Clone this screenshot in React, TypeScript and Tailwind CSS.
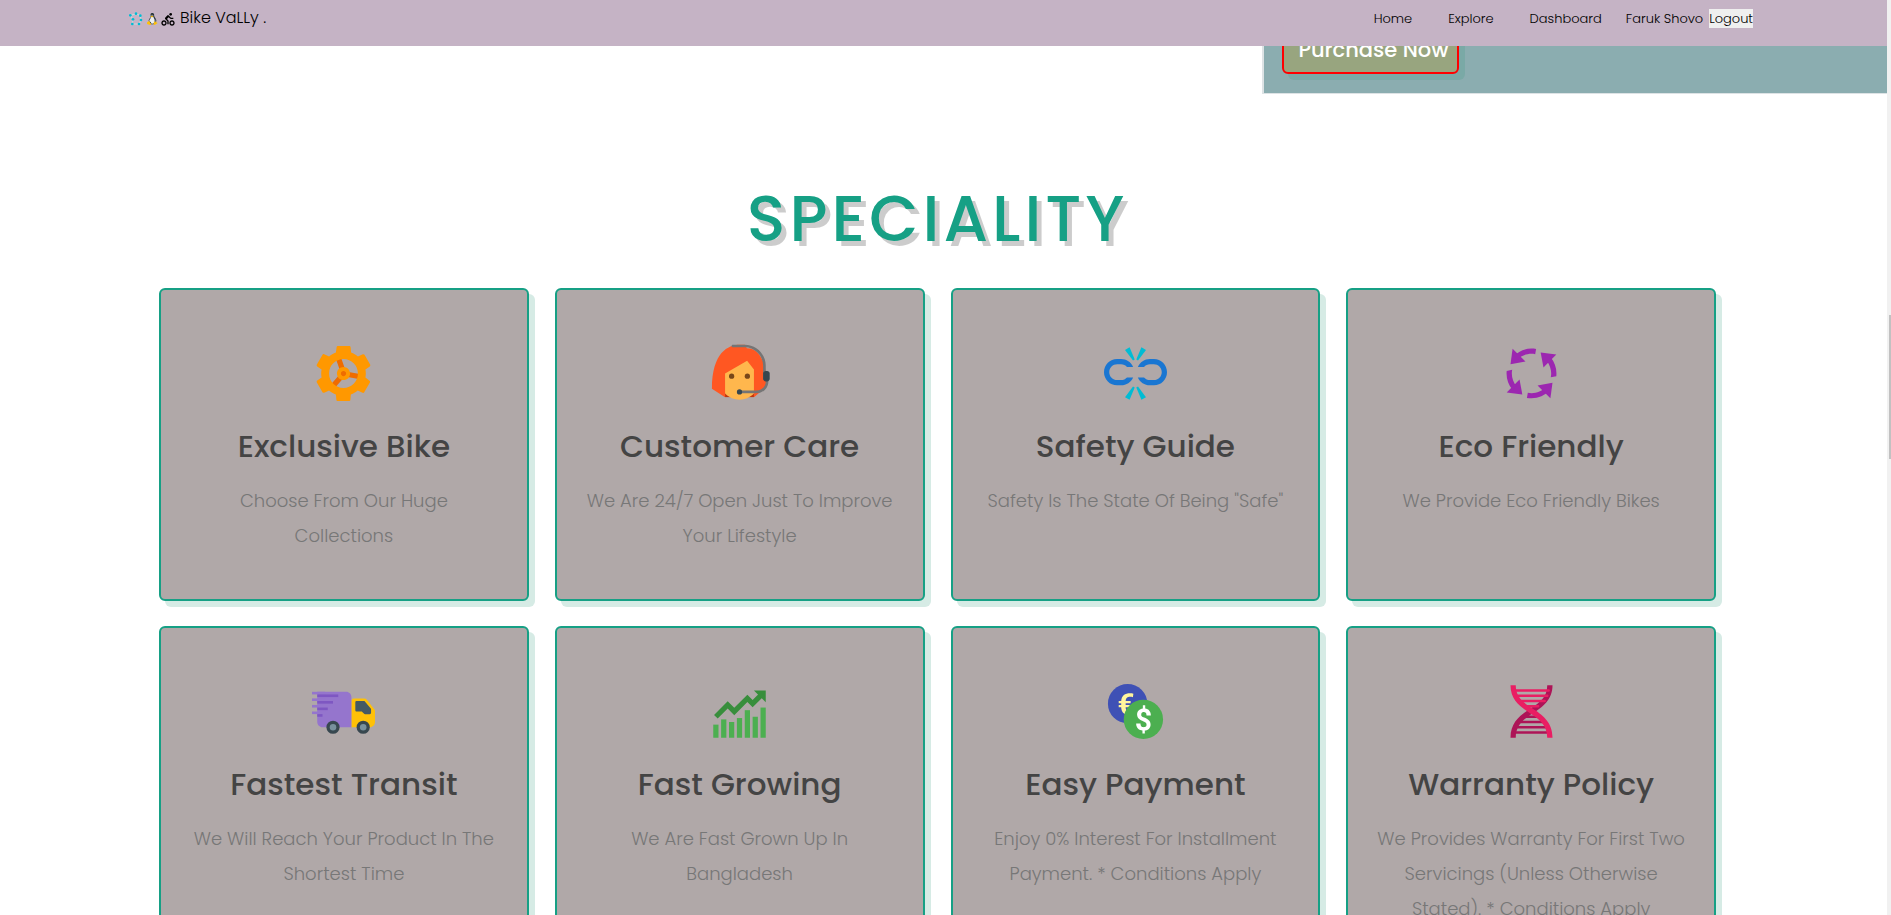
import type { IconType } from "react-icons";
import {
  FcBiotech,
  FcBrokenLink,
  FcBullish,
  FcCurrencyExchange,
  FcEngineering,
  FcInTransit,
  FcLinux,
  FcOnlineSupport,
  FcProcess,
  FcRadarPlot,
} from "react-icons/fc";
import { BiCycling } from "react-icons/bi";

type Feature = { Icon: IconType; title: string; text: string };

const features: Feature[] = [
  { Icon: FcEngineering, title: "Exclusive Bike", text: "Choose From Our Huge Collections" },
  { Icon: FcOnlineSupport, title: "Customer Care", text: "We Are 24/7 Open Just To Improve Your Lifestyle" },
  { Icon: FcBrokenLink, title: "Safety Guide", text: 'Safety Is The State Of Being "Safe"' },
  { Icon: FcProcess, title: "Eco Friendly", text: "We Provide Eco Friendly Bikes" },
  { Icon: FcInTransit, title: "Fastest Transit", text: "We Will Reach Your Product In The Shortest Time" },
  { Icon: FcBullish, title: "Fast Growing", text: "We Are Fast Grown Up In Bangladesh" },
  { Icon: FcCurrencyExchange, title: "Easy Payment", text: "Enjoy 0% Interest For Installment Payment. * Conditions Apply" },
  { Icon: FcBiotech, title: "Warranty Policy", text: "We Provides Warranty For First Two Servicings (Unless Otherwise Stated). * Conditions Apply" },
];

function Header() {
  return (
    <header className="sticky top-0 z-10 flex h-[46px] items-start justify-between bg-[#c5b3c5] pr-[134px] pl-32 text-black">
      <a href="#home" className="flex items-center pt-1.5 text-base leading-6 font-light">
        <FcRadarPlot className="mt-0.5 size-4" />
        <FcLinux className="mt-0.5 size-4" />
        <BiCycling className="mt-0.5 mr-1 size-4" />
        Bike VaLLy .
      </a>
      <nav className="flex items-center pt-[9px] text-[13px] leading-[19px] font-light">
        <a href="#home" className="mr-9">Home</a>
        <a href="#explore" className="mr-9">Explore</a>
        <a href="#dashboard" className="mr-6">Dashboard</a>
        <span className="mr-1.5">Faruk Shovo</span>
        <button type="button" className="bg-[#efefef]">Logout</button>
      </nav>
    </header>
  );
}

function FeatureCard({ Icon, title, text }: Feature) {
  return (
    <article className="min-h-[313px] rounded-md border-2 border-[#16a085] bg-[#b0a8a8] px-7 pt-[52px] pb-8 text-center shadow-[6px_6px_0_#d6ebe5]">
      <Icon className="mx-auto size-[63px]" />
      <h3 className="mt-4 text-[31px] leading-[50px] font-medium text-[#444]">{title}</h3>
      <p className="mt-3 text-lg leading-[35px] font-light text-[#777]">{text}</p>
    </article>
  );
}

export default function App() {
  return (
    <div className="flex h-screen overflow-hidden bg-white font-['Poppins','Inter',sans-serif]">
      <div className="min-w-0 flex-1 overflow-hidden">
        <Header />
        <section className="ml-[66.9%] flex h-12 items-start border-b border-l-2 border-[#dde3e5] bg-[#8badb0] pl-[18px]">
          <button
            type="button"
            className="-mt-8 rounded-md border-2 border-[#f00] bg-[#98a57f] pt-[18px] pr-2 pb-1.5 pl-3.5 text-[21px] leading-8 font-medium text-white shadow-[6px_6px_0_#7aa9a6]"
          >
            Purchase Now
          </button>
        </section>
        <main className="pr-[171px] pl-[159px]">
          <h2 className="pt-[85px] pb-[29px] text-center text-[64px] leading-[80px] font-medium tracking-[4px] text-[#16a085] [text-shadow:5px_5px_0_rgba(0,0,0,0.2)]">
            SPECIALITY
          </h2>
          <div className="grid grid-cols-4 gap-x-[26px] gap-y-[25px]">
            {features.map((feature) => (
              <FeatureCard key={feature.title} {...feature} />
            ))}
          </div>
        </main>
      </div>
      <div className="flex w-1 flex-col bg-[#f1f1f1] pl-0.5" aria-hidden="true">
        <div className="mt-[315px] h-36 bg-[#c1c1c1]" />
      </div>
    </div>
  );
}
